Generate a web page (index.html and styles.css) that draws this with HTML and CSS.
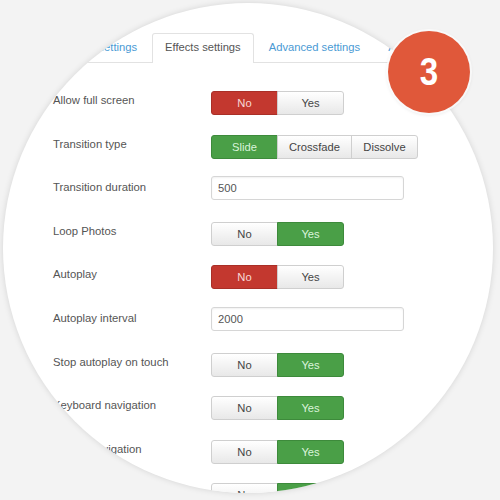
FILE: index.html
```html
<!DOCTYPE html>
<html>
<head>
<meta charset="utf-8">
<link rel="stylesheet" href="styles.css">
</head>
<body>
<div class="stage">
  <div class="disc">
    <div class="panel">
      <ul class="tabs">
        <li class="tab">Basic settings</li>
        <li class="tab active">Effects settings</li>
        <li class="tab">Advanced settings</li>
        <li class="tab">About</li>
      </ul>
      <div class="form">
        <div class="row">
          <div class="label">Allow full screen</div>
          <div class="group"><span class="btn red">No</span><span class="btn">Yes</span></div>
        </div>
        <div class="row">
          <div class="label">Transition type</div>
          <div class="group"><span class="btn green">Slide</span><span class="btn">Crossfade</span><span class="btn">Dissolve</span></div>
        </div>
        <div class="row">
          <div class="label">Transition duration</div>
          <div class="input">500</div>
        </div>
        <div class="row">
          <div class="label">Loop Photos</div>
          <div class="group"><span class="btn">No</span><span class="btn green">Yes</span></div>
        </div>
        <div class="row">
          <div class="label">Autoplay</div>
          <div class="group"><span class="btn red">No</span><span class="btn">Yes</span></div>
        </div>
        <div class="row">
          <div class="label">Autoplay interval</div>
          <div class="input">2000</div>
        </div>
        <div class="row">
          <div class="label">Stop autoplay on touch</div>
          <div class="group"><span class="btn">No</span><span class="btn green">Yes</span></div>
        </div>
        <div class="row">
          <div class="label">Keyboard navigation</div>
          <div class="group"><span class="btn">No</span><span class="btn green">Yes</span></div>
        </div>
        <div class="row">
          <div class="label">Mouse navigation</div>
          <div class="group"><span class="btn">No</span><span class="btn green">Yes</span></div>
        </div>
        <div class="row">
          <div class="label">Show thumbnails</div>
          <div class="group"><span class="btn">No</span><span class="btn green">Yes</span></div>
        </div>
      </div>
    </div>
  </div>
  <div class="badge"><span class="digit">3</span></div>
</div>
</body>
</html>
```

FILE: styles.css
```css
html, body {
  margin: 0;
  padding: 0;
  background: #f3f3f3;
  font-family: "Liberation Sans", Arial, sans-serif;
}

.stage {
  position: relative;
  width: 500px;
  height: 500px;
  padding: 3px;
  box-sizing: border-box;
  overflow: hidden;
}

.disc {
  width: 490px;
  height: 490px;
  border-radius: 50%;
  background: #fff;
  overflow: hidden;
  box-shadow: 0 0 6px rgba(0, 0, 0, 0.13);
}

.panel {
  padding: 30px 0 0 50px;
}

.tabs {
  list-style: none;
  margin: 0 0 0 2px;
  padding: 0;
  display: flex;
  border-bottom: 1px solid #e2e2e2;
  height: 29px;
}

.tab {
  font-size: 11.2px;
  line-height: 27px;
  padding: 0 12px;
  margin-right: 2px;
  border: 1px solid transparent;
  border-bottom: none;
  color: #4a9ad4;
  white-space: nowrap;
  border-radius: 3px 3px 0 0;
}

.tab.active {
  color: #555;
  background: #fff;
  border-color: #e2e2e2;
  height: 29px;
}

.form {
  margin-top: 28px;
}

.row {
  display: flex;
  align-items: flex-start;
  height: 24px;
  margin-bottom: 19.6px;
}

.label {
  width: 158px;
  font-size: 11.3px;
  line-height: 18px;
  color: #555;
  white-space: nowrap;
}

.group {
  display: flex;
}

.btn {
  box-sizing: border-box;
  height: 24px;
  min-width: 67px;
  padding: 0 11px;
  line-height: 22px;
  text-align: center;
  font-size: 11.2px;
  color: #444;
  border: 1px solid #cfcfcf;
  background: linear-gradient(#ffffff, #e8e8e8);
  margin-left: -1px;
}

.btn:first-child {
  margin-left: 0;
  border-radius: 3px 0 0 3px;
}

.btn:last-child {
  border-radius: 0 3px 3px 0;
}

.btn.red {
  background: #c3382f;
  border-color: #a92f27;
  color: rgba(255, 235, 235, 0.9);
}

.btn.green {
  background: #4a9f47;
  border-color: #3d8a3b;
  color: rgba(235, 255, 235, 0.9);
}

.input {
  box-sizing: border-box;
  width: 193px;
  height: 24px;
  margin-top: -2px;
  padding: 0 6px;
  line-height: 22px;
  font-size: 11.2px;
  color: #555;
  border: 1px solid #d6d6d6;
  border-radius: 3px;
  box-shadow: inset 0 1px 2px rgba(0, 0, 0, 0.06);
}

.badge {
  position: absolute;
  left: 388px;
  top: 31px;
  width: 82px;
  height: 82px;
  border-radius: 50%;
  background: #e0583a;
  box-shadow: 0 0 0 2px rgba(255, 255, 255, 0.7), 0 1px 4px rgba(0, 0, 0, 0.15);
  display: flex;
  align-items: center;
  justify-content: center;
}

.digit {
  color: #fff;
  font-family: "Liberation Sans", Arial, sans-serif;
  font-weight: bold;
  font-size: 39px;
  line-height: 1;
  transform: scaleX(0.85);
  margin-top: -1px;
}
```
